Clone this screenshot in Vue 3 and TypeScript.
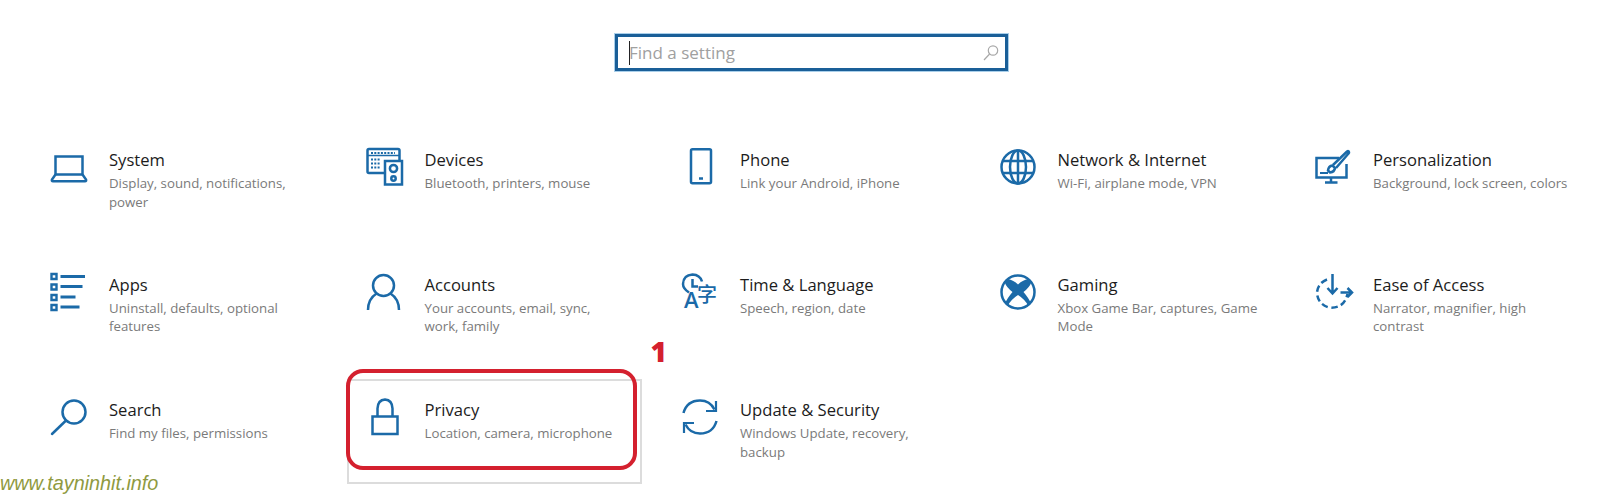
<script setup lang="ts">
const settings = [
  { id: 'system', title: 'System', desc: 'Display, sound, notifications,\npower' },
  { id: 'devices', title: 'Devices', desc: 'Bluetooth, printers, mouse' },
  { id: 'phone', title: 'Phone', desc: 'Link your Android, iPhone' },
  { id: 'network', title: 'Network & Internet', desc: 'Wi-Fi, airplane mode, VPN' },
  { id: 'personalization', title: 'Personalization', desc: 'Background, lock screen, colors' },
  { id: 'apps', title: 'Apps', desc: 'Uninstall, defaults, optional\nfeatures' },
  { id: 'accounts', title: 'Accounts', desc: 'Your accounts, email, sync,\nwork, family' },
  { id: 'time', title: 'Time & Language', desc: 'Speech, region, date' },
  { id: 'gaming', title: 'Gaming', desc: 'Xbox Game Bar, captures, Game\nMode' },
  { id: 'ease', title: 'Ease of Access', desc: 'Narrator, magnifier, high\ncontrast' },
  { id: 'search', title: 'Search', desc: 'Find my files, permissions' },
  { id: 'privacy', title: 'Privacy', desc: 'Location, camera, microphone' },
  { id: 'update', title: 'Update & Security', desc: 'Windows Update, recovery,\nbackup' },
]
</script>

<template>
  <div class="page">
    <div class="search-box">
      <span class="caret"></span>
      <span class="placeholder">Find a setting</span>
      <svg class="search-glyph" width="16" height="17" viewBox="0 0 16 17">
        <circle cx="10" cy="6.5" r="4.7" />
        <path d="M6.6 10 1 16" />
      </svg>
    </div>

    <div class="grid">
      <div v-for="item in settings" :key="item.id" class="card">
        <svg class="icon" width="38" height="38" viewBox="0 0 38 38">
          <template v-if="item.id === 'system'">
            <path d="M5.5 8.5h27v18h-27z" />
            <path d="M5.5 26.5 2 31.5q-.6 1.7 1 1.7h32q1.6 0 1-1.7l-3.5-5" />
          </template>
          <template v-else-if="item.id === 'devices'">
            <path d="M18 25H3q-1.500 0-1.500-1.500V2.500Q1.500 1 3 1h29q1.500 0 1.500 1.500V12" />
            <path d="M1.500 7.500h32" stroke-width="1.600" />
            <path d="M5 5h24M5 11.500h9M5 15.500h9M5 19.500h9" stroke-width="2" stroke-dasharray="2 1.300" />
            <rect x="19" y="13" width="17" height="23.500" />
            <circle cx="27.500" cy="20.500" r="3.600" />
            <circle cx="27.500" cy="30.500" r="2.200" />
          </template>
          <template v-else-if="item.id === 'phone'">
            <rect x="10" y="1.300" width="20" height="34" rx="1.500" />
            <path d="M18 30.500h4" />
          </template>
          <template v-else-if="item.id === 'network'">
            <circle cx="19" cy="19" r="16.500" />
            <ellipse cx="19" cy="19" rx="8" ry="16.500" />
            <path d="M19 2.500v33M4 13h30M4 25h30" />
          </template>
          <template v-else-if="item.id === 'personalization'">
            <path d="M25 10H2.500v19.500h30V16" />
            <path d="M17 29.500v5M11 34.500h12.500" />
            <path d="M6 25h8" stroke-width="2" />
            <path d="M14 22.500q.5-4.500 4.500-5l2.500 2.500q-.5 4-5 4.500z" />
            <path d="M19 17 33 3.500q1.500-1 2 .5.300.700-.500 1.500L22 20" />
          </template>
          <template v-else-if="item.id === 'apps'">
            <path class="solid-thin" d="M1.500 1h5v5h-5zM1.500 11.500h5v5h-5zM1.500 22h5v5h-5zM1.500 32h5v5h-5z" />
            <path d="M10.500 3.500H35M10.500 13.500h22M10.500 24h15M10.500 34h19" stroke-width="2.800" />
          </template>
          <template v-else-if="item.id === 'accounts'">
            <circle cx="17.500" cy="12.500" r="10.500" />
            <path d="M2 37q0-11 8.500-16.500M33 37q0-11-8.500-16.500" />
          </template>
          <template v-else-if="item.id === 'time'">
            <path d="M8 19.500Q2 15.500 2 11 2.300 2 11.500 1.500 19 1.800 21 8.500" />
            <path d="M11.500 6v7.500h5.500" />
            <text x="3" y="35" class="glyph-a">A</text>
            <text x="16" y="29" class="glyph-zi">字</text>
          </template>
          <template v-else-if="item.id === 'gaming'">
            <circle cx="19" cy="19" r="16.500" />
            <path class="solid" d="M8 6Q14 6.500 19 11.500 24 6.500 30 6L32.500 9Q30.500 14.500 24.500 19 30 25.500 32 30.500L29.500 33Q25.500 26 19 22 12.500 26 8.500 33L6 30.500Q8 25.500 13.500 19 7.500 14.500 5.500 9z" />
          </template>
          <template v-else-if="item.id === 'ease'">
            <path d="M13 6.500Q4 10 3 19.500 3.500 31 15 34.500 30 36 33.500 21" stroke-dasharray="6.500 3.500" />
            <path d="M18.500 1v19M13.500 15l5 5.500 5-5.500" />
            <path d="M26.500 19.500h11.500M33.500 15l4.500 4.500-4.500 4.500" />
          </template>
          <template v-else-if="item.id === 'search'">
            <circle cx="24" cy="14" r="11.500" />
            <path d="M16 22.500 2 36" stroke-linecap="round" />
          </template>
          <template v-else-if="item.id === 'privacy'">
            <path d="M6.500 18.500h25v17.500h-25z" />
            <path d="M11.500 18.500V10.500q.3-8.500 7.500-9 7.200.5 7.500 9v8" />
          </template>
          <template v-else>
            <path d="M2.500 15Q6 2.500 19 2.500q10 0 14.500 9" />
            <path d="M35 3v10h-10" stroke-width="2.200" />
            <path d="M35.500 23Q32 35.500 19 35.500q-10 0-14.500-9" />
            <path d="M3 35V25h10" stroke-width="2.200" />
          </template>
        </svg>
        <div class="text">
          <div class="title">{{ item.title }}</div>
          <div class="desc">{{ item.desc }}</div>
        </div>
        <template v-if="item.id === 'privacy'">
          <div class="hover-outline"></div>
          <div class="red-ring"></div>
          <div class="step-number">1</div>
        </template>
      </div>
    </div>

    <div class="watermark">www.tayninhit.info</div>
  </div>
</template>

<style scoped>
.page {
  position: relative;
  width: 1600px;
  height: 495px;
  overflow: hidden;
  background: #fff;
  font-family: "Open Sans", "Noto Sans", sans-serif;
}

.search-box {
  box-sizing: border-box;
  display: flex;
  align-items: center;
  width: 393px;
  height: 37px;
  margin: 34px 0 0 615px;
  padding: 0 6px 0 11px;
  border: 3px solid #1a5f98;
  box-shadow: 0 0 0 1px #a9cfea;
}

.caret {
  width: 1px;
  height: 24px;
  margin-right: -1px;
  background: #222;
}

.placeholder {
  flex: 1;
  font-size: 17px;
  color: #a0a0a0;
}

.search-glyph {
  fill: none;
  stroke: #a8a8a8;
  stroke-width: 1.200;
}

.grid {
  display: grid;
  grid-template-columns: 315.5px 315.5px 317.5px 315.5px 235px;
  grid-template-rows: 124.500px 125.500px 100px;
  margin-top: 77px;
  padding-left: 50px;
}

.card {
  position: relative;
  display: flex;
  align-items: flex-start;
  gap: 21px;
}

.icon {
  flex-shrink: 0;
  overflow: visible;
  fill: none;
  stroke: #1b6aa8;
  stroke-width: 2.500;
}

.solid {
  fill: #1b6aa8;
  stroke: none;
}

.solid-thin {
  fill: none;
  stroke-width: 2.400;
}

.glyph-a {
  fill: #1b6aa8;
  stroke: none;
  font-size: 22px;
  font-weight: 600;
}

.glyph-zi {
  fill: #1b6aa8;
  stroke: none;
  font-size: 20px;
  font-weight: 500;
  font-family: "Noto Sans CJK SC", sans-serif;
}

.title {
  font-size: 16.600px;
  line-height: 24px;
  color: #1c1c1c;
}

.desc {
  margin-top: 2px;
  font-size: 13.250px;
  line-height: 18.500px;
  color: #7a7a7a;
  white-space: pre;
}

.hover-outline {
  position: absolute;
  left: -18.500px;
  top: -19px;
  width: 291px;
  height: 101px;
  border: 2px solid #dcdcdc;
}

.red-ring {
  position: absolute;
  left: -19.500px;
  top: -29px;
  box-sizing: border-box;
  width: 291px;
  height: 101px;
  border: 4px solid #d4202e;
  border-radius: 17px;
}

.step-number {
  position: absolute;
  left: 285px;
  top: -63px;
  font-size: 28px;
  line-height: 32px;
  font-weight: 800;
  color: #d4202e;
}

.watermark {
  position: absolute;
  left: 0;
  top: 472px;
  font-family: "Liberation Sans", Arial, sans-serif;
  font-size: 19.800px;
  font-style: italic;
  line-height: 22px;
  color: #8f9a3f;
}
</style>
